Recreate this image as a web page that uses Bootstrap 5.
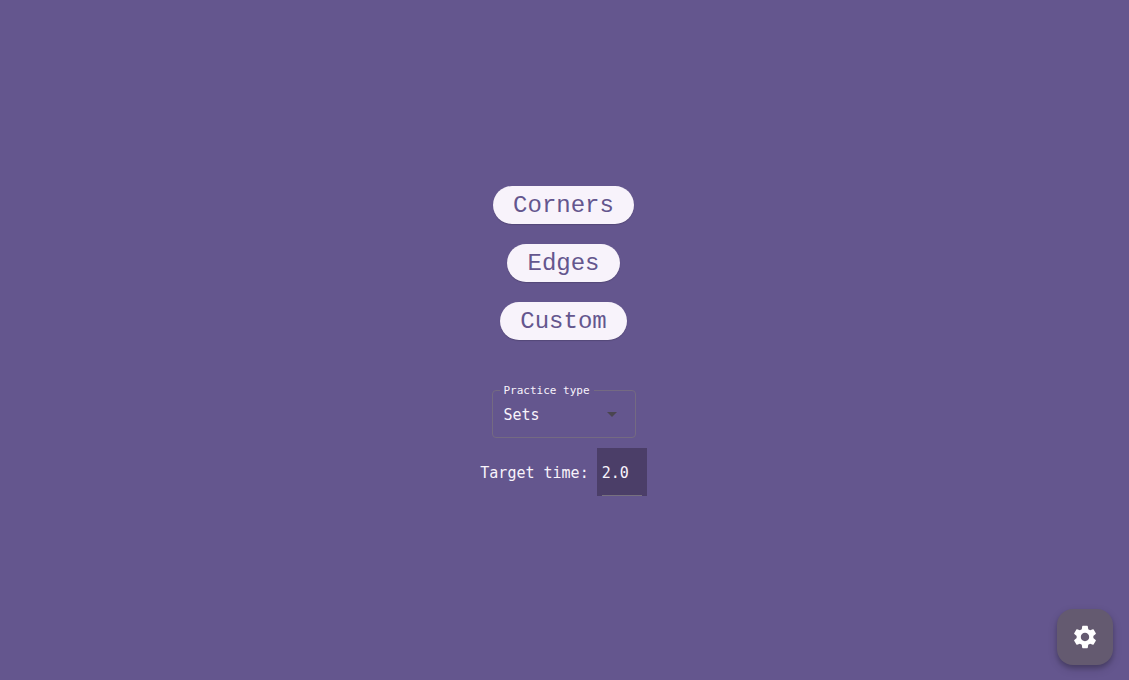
<!DOCTYPE html>
<html lang="en">
<head>
<meta charset="utf-8">
<meta name="viewport" content="width=device-width, initial-scale=1">
<title>Practice</title>
<link rel="stylesheet" href="https://cdn.jsdelivr.net/npm/bootstrap@5.3.0/dist/css/bootstrap.min.css">
<style>
  body { background: #64568e; color: #f8f3fb; font: 15px/20px "DejaVu Sans Mono", monospace; }
  main { padding: 2px 2px 0 0; }
  .pill { background: #f8f3fb; color: #64568e; font: 24px/36px "Liberation Mono", monospace; padding: 2px 20px 0; border: 0; box-shadow: 0 1px 1px rgba(0,0,0,.16); }
  .pill:hover { background: #fff; color: #64568e; }
  .menu-stack { gap: 20px; }
  .options { gap: 10px; margin-top: 50px; }
  .practice { width: 144px; }
  .practice-label { top: -7px; left: 8px; padding: 0 4px; font-size: 11px; line-height: 16px; background: #64568e; }
  .practice-select { height: 48px; padding: 2px 11px 0; appearance: none; color: inherit; background: transparent; border: 1px solid #746a82; border-radius: 4px; }
  .practice-select option { color: #222; }
  .caret { right: 19px; top: 22px; pointer-events: none; }
  .time-label { padding-top: 2px; }
  .time-field { width: 50px; height: 48px; padding: 0 5px; background: #4b3e68; }
  .time-input { height: 48px; color: inherit; background: transparent; border: 0; border-bottom: 1px solid #77707f; padding: 2px 0 0; border-radius: 0; }
  .settings { width: 56px; height: 56px; right: 16px; bottom: 15px; border: 0; border-radius: 16px; background: #645a70; color: #fff; box-shadow: 0 3px 5px rgba(0,0,0,.2), 0 4px 10px rgba(0,0,0,.16); }
</style>
</head>
<body>
<main class="min-vh-100 d-flex flex-column align-items-center justify-content-center">
  <div class="menu-stack d-flex flex-column align-items-center">
    <button type="button" class="btn pill rounded-pill">Corners</button>
    <button type="button" class="btn pill rounded-pill">Edges</button>
    <button type="button" class="btn pill rounded-pill">Custom</button>
  </div>
  <form class="options d-flex flex-column align-items-center">
    <div class="practice position-relative">
      <select id="practice" class="practice-select d-block w-100">
        <option>Sets</option>
      </select>
      <label for="practice" class="practice-label position-absolute text-nowrap">Practice type</label>
      <svg class="caret position-absolute" width="10" height="5" viewBox="0 0 10 5" aria-hidden="true"><path d="M0 0h10L5 5z" fill="#4a4550"/></svg>
    </div>
    <div class="d-flex align-items-center gap-2">
      <label for="target" class="time-label">Target time:</label>
      <div class="time-field"><input id="target" class="time-input d-block w-100" type="text" inputmode="decimal" value="2.0"></div>
    </div>
  </form>
</main>
<button type="button" class="settings position-fixed d-flex align-items-center justify-content-center" aria-label="Settings">
  <svg width="28" height="28" viewBox="0 0 24 24" fill="currentColor" aria-hidden="true"><path d="M19.14 12.94c.04-.3.06-.61.06-.94 0-.32-.02-.64-.07-.94l2.03-1.58c.18-.14.23-.41.12-.61l-1.92-3.32c-.12-.22-.37-.29-.59-.22l-2.39.96c-.5-.38-1.03-.7-1.62-.94l-.36-2.54c-.04-.24-.24-.41-.48-.41h-3.84c-.24 0-.43.17-.47.41l-.36 2.54c-.59.24-1.13.57-1.62.94l-2.39-.96c-.22-.08-.47 0-.59.22L2.74 8.87c-.12.21-.08.47.12.61l2.03 1.58c-.05.3-.09.63-.09.94s.02.64.07.94l-2.03 1.58c-.18.14-.23.41-.12.61l1.92 3.32c.12.22.37.29.59.22l2.39-.96c.5.38 1.03.7 1.62.94l.36 2.54c.05.24.24.41.48.41h3.84c.24 0 .44-.17.47-.41l.36-2.54c.59-.24 1.13-.56 1.62-.94l2.39.96c.22.08.47 0 .59-.22l1.92-3.32c.12-.22.07-.47-.12-.61l-2.01-1.58zM12 15.6c-1.98 0-3.6-1.62-3.6-3.6s1.62-3.6 3.6-3.6 3.6 1.62 3.6 3.6-1.62 3.6-3.6 3.6z"/></svg>
</button>
<script src="https://cdn.jsdelivr.net/npm/bootstrap@5.3.0/dist/js/bootstrap.bundle.min.js"></script>
</body>
</html>
